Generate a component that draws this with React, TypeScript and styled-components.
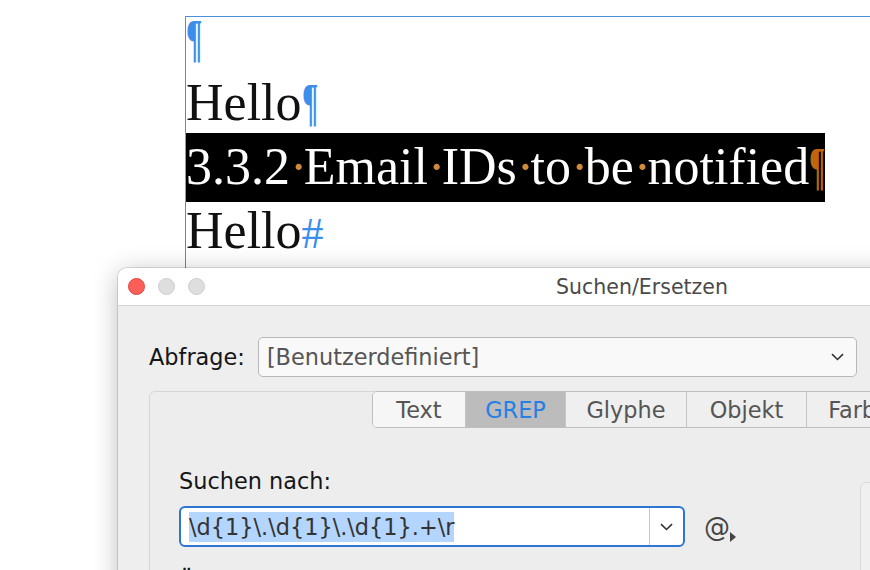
import React from 'react'
import styled, { createGlobalStyle } from 'styled-components'

const GlobalStyle = createGlobalStyle`
  * { box-sizing: border-box; }
  html, body { margin: 0; padding: 0; overflow: hidden; background: #fff; }
`

const Screen = styled.div`
  position: relative;
  width: 870px;
  height: 570px;
  overflow: hidden;
  background: #fff;
  padding: 16px 0 0 185px;
`

const TextFrame = styled.div`
  height: 600px;
  border-top: 1px solid #4a90d9;
  border-left: 1px solid #4a90d9;
`

const Story = styled.div`
  margin-top: -10px;
  font-family: 'Liberation Serif', serif;
  font-size: 52px;
  line-height: 64px;
  color: #111;
`

const Para = styled.div`
  white-space: pre;
`

const Pilcrow = styled.span<{ $tone: 'blue' | 'orange' }>`
  display: inline-block;
  width: 16px;
  font-weight: 700;
  transform: scaleX(0.58);
  transform-origin: left;
  color: ${(p) => (p.$tone === 'blue' ? '#3b8fea' : '#c0650e')};
`

const StoryEnd = styled.span`
  color: #3b8fea;
  font-size: 44px;
`

const SpaceDot = styled.span`
  color: #d08a3a;
  letter-spacing: -3.6px;
`

const Highlight = styled.span`
  background: #000;
  color: #fff;
  padding: 5px 0 7px;
  margin-left: -1px;
  border-left: 1px solid #c8923e;
`

const Window = styled.div`
  position: absolute;
  left: 118px;
  top: 268px;
  width: 1048px;
  height: 420px;
  border-radius: 9px 9px 0 0;
  background: #eeeeee;
  box-shadow: 0 0 0 1px rgba(0, 0, 0, 0.12), 0 4px 26px rgba(0, 0, 0, 0.26);
  overflow: hidden;
  font-family: 'DejaVu Sans', sans-serif;
`

const TitleBar = styled.div`
  display: grid;
  grid-template-columns: 1fr auto 1fr;
  align-items: center;
  height: 38px;
  background: #fff;
  border-bottom: 1px solid #d3d3d3;
`

const Lights = styled.div`
  display: flex;
  gap: 13px;
  padding-left: 10px;
`

const Light = styled.span<{ $red?: boolean }>`
  width: 17px;
  height: 17px;
  border-radius: 50%;
  background: ${(p) => (p.$red ? '#fc5f57' : '#dedede')};
  border: 1px solid ${(p) => (p.$red ? '#e0443e' : '#cdcdcd')};
`

const Title = styled.div`
  font-size: 20.5px;
  color: #4a4a4a;
`

const Body = styled.div`
  padding: 31px 31px 0;
`

const QueryRow = styled.div`
  display: flex;
  align-items: center;
  gap: 13px;
  height: 40px;
`

const Label = styled.div`
  font-size: 22.4px;
  line-height: 26px;
  color: #161616;
  white-space: nowrap;
`

const Select = styled.div`
  width: 599px;
  height: 40px;
  display: flex;
  align-items: center;
  justify-content: space-between;
  padding: 0 12px 0 8px;
  border: 1.5px solid #b7b7b7;
  border-radius: 5px;
  background: #f9f9f9;
  font-size: 22.4px;
  color: #555;
`

const Panel = styled.div`
  margin-top: 14px;
  height: 320px;
  border: 1px solid #d6d6d6;
  border-radius: 6px;
  background: #ededed;
`

const Tabs = styled.div`
  display: flex;
  justify-content: center;
  margin-top: -1px;
`

const TabGroup = styled.div`
  display: flex;
  border: 1.5px solid #bebebe;
  border-radius: 5px;
  overflow: hidden;
`

const Tab = styled.div<{ $w: number; $active?: boolean; $light?: boolean }>`
  width: ${(p) => p.$w}px;
  height: 35px;
  display: flex;
  align-items: center;
  justify-content: center;
  font-size: 22.4px;
  color: ${(p) => (p.$active ? '#2680e3' : '#555')};
  background: ${(p) => (p.$active ? '#bcbcbc' : p.$light ? '#f6f6f6' : '#efefef')};
  & + & {
    border-left: 1.5px solid #c4c4c4;
  }
`

const PanelContent = styled.div`
  display: grid;
  grid-template-columns: 681px 1fr;
  padding: 40px 29px 0;
`

const Fields = styled.div`
  display: flex;
  flex-direction: column;
`

const InputRow = styled.div`
  display: flex;
  align-items: center;
  gap: 19px;
  margin-top: 12px;
`

const Combo = styled.div`
  width: 506px;
  height: 41px;
  display: flex;
  border: 2px solid #2f76d2;
  border-radius: 6px;
  background: #fff;
`

const ComboText = styled.div`
  flex: 1;
  display: flex;
  align-items: center;
  padding-left: 8px;
`

const Selection = styled.span`
  display: inline-block;
  line-height: 30px;
  font-size: 22.4px;
  color: #333;
  background: #b4d6fe;
  white-space: pre;
`

const ComboArrow = styled.div`
  width: 34px;
  display: flex;
  align-items: center;
  justify-content: center;
  border-left: 1.5px solid #c9c9c9;
`

const SpecialChars = styled.div`
  display: flex;
  align-items: flex-end;
  font-size: 26px;
  color: #444;
`

const NextLabel = styled(Label)`
  margin-top: 21px;
`

const OptionsBox = styled.div`
  margin-top: 14px;
  height: 220px;
  border: 1px solid #dadada;
  border-radius: 6px;
  background: #f0f0f0;
`

const Chevron = () => (
  <svg width='13' height='8' viewBox='0 0 13 8'>
    <path d='M1 1.2 L6.5 6.5 L12 1.2' fill='none' stroke='#333' strokeWidth='1.6' />
  </svg>
)

const tabs = [
  { label: 'Text', w: 92, light: true },
  { label: 'GREP', w: 100, active: true },
  { label: 'Glyphe', w: 121 },
  { label: 'Objekt', w: 120 },
  { label: 'Farbe', w: 105 },
]

const words = ['3.3.2', 'Email', 'IDs', 'to', 'be', 'notified']

export default function App() {
  return (
    <>
      <GlobalStyle />
      <Screen>
        <TextFrame>
          <Story>
            <Para>
              <Pilcrow $tone='blue'>¶</Pilcrow>
            </Para>
            <Para>
              Hello<Pilcrow $tone='blue'>¶</Pilcrow>
            </Para>
            <Para>
              <Highlight>
                {words.map((w, i) => (
                  <React.Fragment key={w}>
                    {i > 0 && <SpaceDot>·</SpaceDot>}
                    {w}
                  </React.Fragment>
                ))}
                <Pilcrow $tone='orange'>¶</Pilcrow>
              </Highlight>
            </Para>
            <Para>
              Hello<StoryEnd>#</StoryEnd>
            </Para>
          </Story>
        </TextFrame>

        <Window>
          <TitleBar>
            <Lights>
              <Light $red />
              <Light />
              <Light />
            </Lights>
            <Title>Suchen/Ersetzen</Title>
            <div />
          </TitleBar>
          <Body>
            <QueryRow>
              <Label>Abfrage:</Label>
              <Select>
                <span>[Benutzerdefiniert]</span>
                <Chevron />
              </Select>
            </QueryRow>
            <Panel>
              <Tabs>
                <TabGroup>
                  {tabs.map((t) => (
                    <Tab key={t.label} $w={t.w} $active={t.active} $light={t.light}>
                      {t.label}
                    </Tab>
                  ))}
                </TabGroup>
              </Tabs>
              <PanelContent>
                <Fields>
                  <Label>Suchen nach:</Label>
                  <InputRow>
                    <Combo>
                      <ComboText>
                        <Selection>{'\\d{1}\\.\\d{1}\\.\\d{1}.+\\r'}</Selection>
                      </ComboText>
                      <ComboArrow>
                        <Chevron />
                      </ComboArrow>
                    </Combo>
                    <SpecialChars>
                      @
                      <svg width='7' height='10' viewBox='0 0 7 10'>
                        <path d='M0 0 L6 5 L0 10 Z' fill='#444' />
                      </svg>
                    </SpecialChars>
                  </InputRow>
                  <NextLabel>Ändern in:</NextLabel>
                </Fields>
                <OptionsBox />
              </PanelContent>
            </Panel>
          </Body>
        </Window>
      </Screen>
    </>
  )
}
